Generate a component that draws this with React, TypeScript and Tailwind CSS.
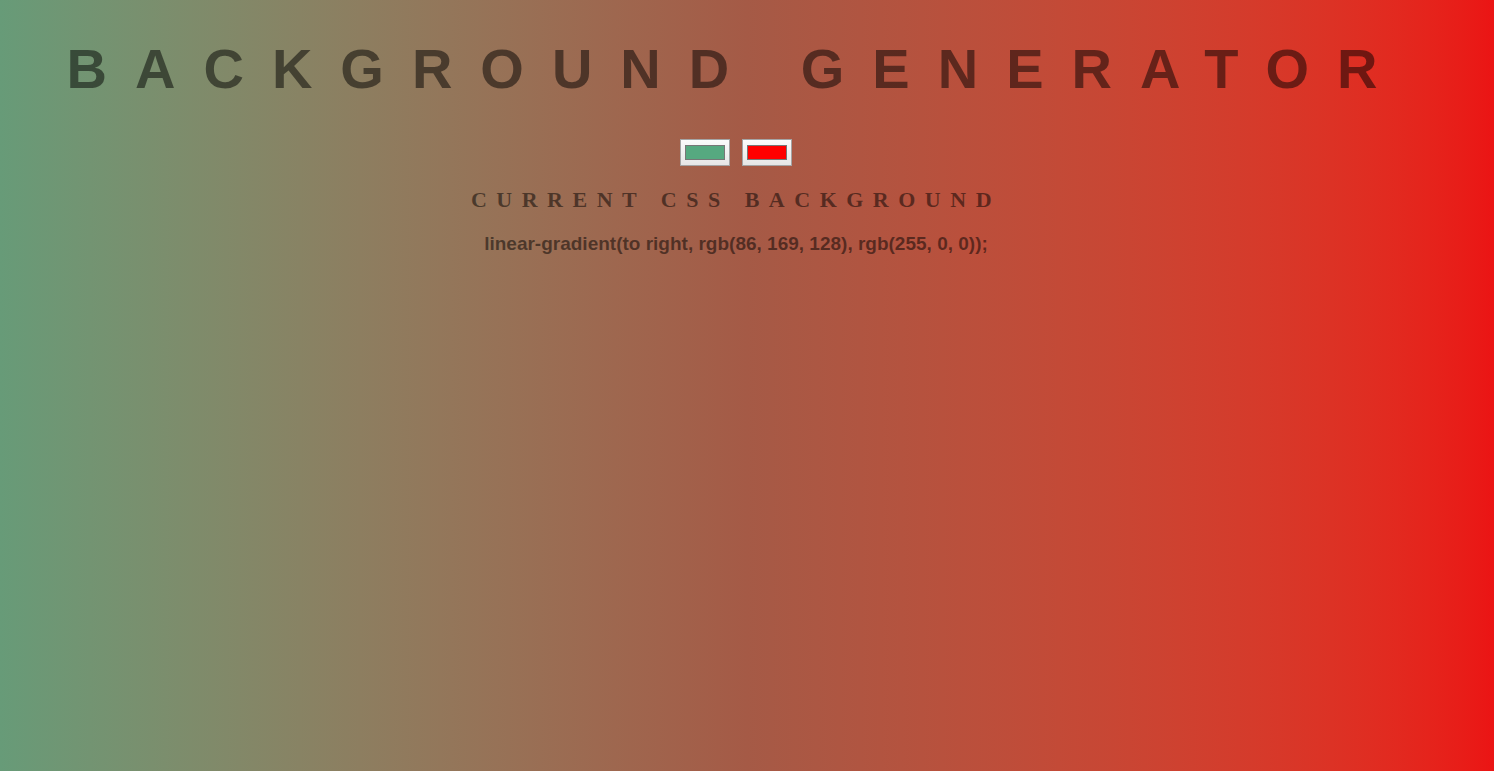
import { useState } from "react"

function ColorBox({ color }: { color: string }) {
  return (
    <div className="w-[50px] h-[27px] border border-[#a4a4a4] bg-gradient-to-b from-[#fbfbfb] to-[#e6e6e6] flex items-center justify-center">
      <div className="w-[40px] h-[15px] border border-[#777777]" style={{ backgroundColor: color }} />
    </div>
  )
}

export default function App() {
  const [left] = useState("rgb(86, 169, 128)")
  const [right] = useState("rgb(255, 0, 0)")

  return (
    <div className="min-h-screen w-full bg-gradient-to-r from-[#679b78] via-[#a55a46] to-[#eb1414] text-black/50 font-['Liberation_Sans',Arial,sans-serif]">
      <div className="pr-[22px] flex flex-col items-center text-center">
        <h1 className="mt-[37px] text-[56px] leading-[64px] font-bold tracking-[0.5em] whitespace-nowrap">
          BACKGROUND GENERATOR
        </h1>

        <div className="mt-[38px] flex gap-3">
          <ColorBox color="#56a980" />
          <ColorBox color="#ff0000" />
        </div>

        <h3 className="mt-[21px] font-['Liberation_Serif','Times_New_Roman',serif] text-[22px] leading-[25px] font-bold tracking-[9.5px]">
          CURRENT CSS BACKGROUND
        </h3>

        <p className="mt-[21px] text-[19px] leading-[22px] font-bold">
          linear-gradient(to right, {left}, {right});
        </p>
      </div>
    </div>
  )
}
